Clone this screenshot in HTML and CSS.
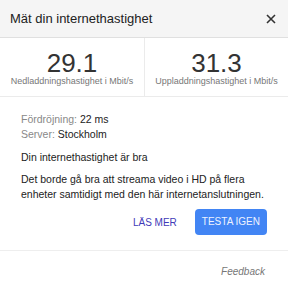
FILE: index.html
```html
<!DOCTYPE html>
<html lang="sv">
<head>
<meta charset="utf-8">
<link rel="stylesheet" href="styles.css">
</head>
<body>
<div class="panel">
  <div class="header">
    <span class="title">Mät din internethastighet</span>
    <svg class="close" width="10" height="10" viewBox="0 0 10 10"><path d="M1 1L9 9M9 1L1 9" stroke="#333" stroke-width="1.6" fill="none"/></svg>
  </div>
  <div class="stats">
    <div class="stat">
      <div class="num">29.1</div>
      <div class="lbl">Nedladdningshastighet i Mbit/s</div>
    </div>
    <div class="stat right">
      <div class="num">31.3</div>
      <div class="lbl">Uppladdningshastighet i Mbit/s</div>
    </div>
  </div>
  <div class="content">
    <div class="info"><span class="key">Fördröjning:</span> 22 ms</div>
    <div class="info"><span class="key">Server:</span> Stockholm</div>
    <p class="verdict">Din internethastighet är bra</p>
    <p class="desc">Det borde gå bra att streama video i HD på flera enheter samtidigt med den här internetanslutningen.</p>
    <div class="actions">
      <span class="link">LÄS MER</span>
      <span class="btn">TESTA IGEN</span>
    </div>
  </div>
  <div class="footer">
    <span class="feedback">Feedback</span>
  </div>
</div>
</body>
</html>
```
FILE: styles.css
```css
html, body {
  margin: 0;
  padding: 0;
  background: #fff;
}
body {
  font-family: "Liberation Sans", Arial, sans-serif;
  color: #222;
}
.header {
  height: 37px;
  background: #f5f5f5;
  border-bottom: 1px solid #e0e0e0;
  display: flex;
  align-items: center;
  justify-content: space-between;
  padding: 0 12px 0 10px;
}
.title {
  font-size: 13px;
  color: #222;
}
.close {
  display: block;
}
.stats {
  display: grid;
  grid-template-columns: 144px 1fr;
  border-bottom: 1px solid #ebebeb;
}
.stat {
  text-align: center;
  padding: 12px 0 10px;
}
.stat.right {
  border-left: 1px solid #ebebeb;
}
.num {
  font-size: 26px;
  line-height: 26px;
  color: #333;
}
.lbl {
  font-size: 9px;
  line-height: 10px;
  color: #777;
}
.content {
  padding: 15px 21px 15px;
  font-size: 10.5px;
  line-height: 15px;
}
.info {
  color: #222;
}
.key {
  color: #888;
}
.verdict {
  margin: 8px 0 0;
}
.desc {
  margin: 7px 0 0;
}
.actions {
  display: flex;
  justify-content: flex-end;
  align-items: center;
  gap: 18px;
  margin-top: 7px;
}
.link {
  color: #3f3ab8;
  font-size: 10px;
}
.btn {
  background: #4285f4;
  color: #eef3ff;
  font-size: 10px;
  height: 26px;
  line-height: 26px;
  padding: 0 7px;
  border-radius: 4px;
}
.footer {
  border-top: 1px solid #eee;
  display: flex;
  justify-content: flex-end;
  padding: 15px 23px 0;
}
.feedback {
  font-size: 10px;
  font-style: italic;
  color: #777;
}
```
